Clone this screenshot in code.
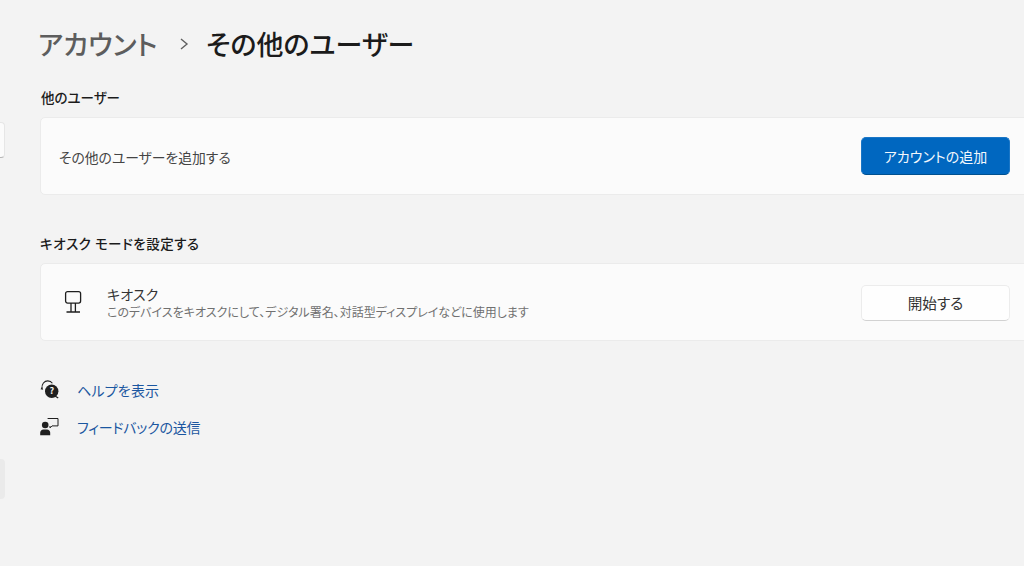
<div class="page">
  <div class="side-stub white"></div>
  <div class="side-stub grey"></div>

  <main class="main">
    <h1 class="crumb">
      <span class="parent">アカウント</span>
      <svg class="chevron" width="10" height="14" viewBox="0 0 10 14"><path d="M2 2l6 5-6 5" fill="none" stroke="#5f5f5f" stroke-width="1.4" /></svg>
      <span class="current">その他のユーザー</span>
    </h1>

    <h2 class="label first">他のユーザー</h2>
    <section class="card add">
      <span class="row-text">その他のユーザーを追加する</span>
      <button type="button" class="btn primary">アカウントの追加</button>
    </section>

    <h2 class="label second">キオスク モードを設定する</h2>
    <section class="card kiosk">
      <svg class="kiosk-icon" width="20" height="24" viewBox="0 0 20 24" fill="none" stroke="#1f1f1f" stroke-width="1.3">
        <rect x="2.6" y="1.6" width="15" height="11.5" rx="2" />
        <path d="M8 13v8.5M12.4 13v8.5M3.5 22h13.5" />
      </svg>
      <div class="kiosk-text">
        <div class="kiosk-title">キオスク</div>
        <div class="kiosk-sub">このデバイスをキオスクにして、デジタル署名、対話型ディスプレイなどに使用します</div>
      </div>
      <button type="button" class="btn plain">開始する</button>
    </section>

    <div class="links">
      <a class="link help" href="#help">
        <svg width="20" height="20" viewBox="0 0 20 20">
          <path d="M2 8.6C1.4 4 4.4.9 7.8.9c2 0 3.6.9 4.6 2.4" fill="none" stroke="#1f1f1f" stroke-width="1.1" />
          <path d="M2 7 .5 9.2l2.7.5z" fill="#1f1f1f" />
          <circle cx="11.7" cy="11.2" r="6.7" fill="#1f1f1f" />
          <path d="M15 16l3.2 2" stroke="#1f1f1f" stroke-width="1.3" />
          <text x="11.7" y="14.4" text-anchor="middle" class="q">?</text>
        </svg>
        <span>ヘルプを表示</span>
      </a>
      <a class="link feedback" href="#feedback">
        <svg width="20" height="20" viewBox="0 0 20 20">
          <circle cx="5.2" cy="8" r="3.3" fill="#1f1f1f" />
          <path d="M.2 18.2v-2.4c0-2 1.4-3.3 3.2-3.3h3.6c1.8 0 3.2 1.3 3.2 3.3v2.4z" fill="#1f1f1f" />
          <path d="M7.6 1.5h10.4v7.4h-6l-2 2V9" fill="none" stroke="#1f1f1f" stroke-width="1" />
        </svg>
        <span>フィードバックの送信</span>
      </a>
    </div>
  </main>
</div>

<style>
  :global(body) {
    margin: 0;
    background: #f3f3f3;
  }

  .page {
    position: relative;
    width: 1024px;
    height: 566px;
    overflow: hidden;
    background: #f3f3f3;
    font-family: "Noto Sans CJK JP", "Noto Sans", sans-serif;
    color: #1f1f1f;
  }

  .side-stub {
    position: absolute;
    left: -10px;
    width: 15px;
    border-radius: 4px;
  }

  .side-stub.white {
    top: 122px;
    height: 36px;
    background: #fbfbfb;
    border: 1px solid #e6e6e6;
    border-bottom-color: #b5b5b5;
    box-sizing: border-box;
  }

  .side-stub.grey {
    top: 459px;
    height: 40px;
    background: #eaeaea;
  }

  .main {
    width: 1000px;
    padding: 22px 0 0 40px;
    box-sizing: border-box;
  }

  .crumb {
    display: flex;
    align-items: center;
    margin: 0 0 0 -2px;
    height: 44px;
    font-size: 27px;
    font-weight: 500;
    line-height: 44px;
    font-feature-settings: "palt";
  }

  .parent {
    color: #5d5d5d;
    width: 141px;
  }

  .chevron {
    margin-right: 17px;
  }

  .current {
    color: #1b1b1b;
  }

  .label {
    margin: 0;
    font-size: 13.5px;
    font-weight: 500;
    line-height: 20px;
    color: #1b1b1b;
    font-feature-settings: "palt";
  }

  .label.first {
    margin-top: 21px;
    margin-bottom: 10px;
    padding-left: 1px;
  }

  .label.second {
    margin-top: 38px;
    margin-bottom: 10px;
    letter-spacing: 0.5px;
  }

  .card {
    display: flex;
    align-items: center;
    width: 1000px;
    height: 78px;
    box-sizing: border-box;
    background: #fbfbfb;
    border: 1px solid #ebebeb;
    border-radius: 5px;
  }

  .add {
    padding-left: 18px;
  }

  .row-text {
    flex: 1;
    padding-top: 1px;
    font-size: 13.8px;
    color: #444;
    font-feature-settings: "palt";
  }

  .btn {
    width: 149px;
    margin-right: 29px;
    padding: 0;
    font-family: inherit;
    font-size: 14px;
    border-radius: 5px;
    font-feature-settings: "palt";
    box-sizing: border-box;
  }

  .primary {
    height: 38px;
    color: #f2f7fc;
    background: #0067c0;
    border: 1px solid #1a76c6;
    border-bottom-color: #00508f;
  }

  .plain {
    height: 36px;
    margin-top: 1px;
    font-size: 14.6px;
    color: #333;
    background: #fefefe;
    border: 1px solid #ececec;
    border-bottom-color: #d2d2d2;
  }

  .kiosk-icon {
    margin-left: 22px;
    flex: none;
  }

  .kiosk-text {
    flex: 1;
    margin-left: 24px;
    font-feature-settings: "palt";
  }

  .kiosk-title {
    font-size: 14px;
    line-height: 20px;
    color: #333;
  }

  .kiosk-sub {
    font-size: 12px;
    line-height: 16px;
    color: #707070;
  }

  .links {
    display: flex;
    flex-direction: column;
    gap: 17px;
    margin-top: 39px;
  }

  .link {
    display: flex;
    align-items: center;
    gap: 17px;
    height: 20px;
    font-size: 14px;
    color: #1a56a0;
    text-decoration: none;
    font-feature-settings: "palt";
  }

  .help span {
    letter-spacing: 0.2px;
  }

  .feedback span {
    letter-spacing: -0.2px;
  }

  .q {
    font-size: 9px;
    font-weight: 700;
    fill: #f3f3f3;
  }
</style>
